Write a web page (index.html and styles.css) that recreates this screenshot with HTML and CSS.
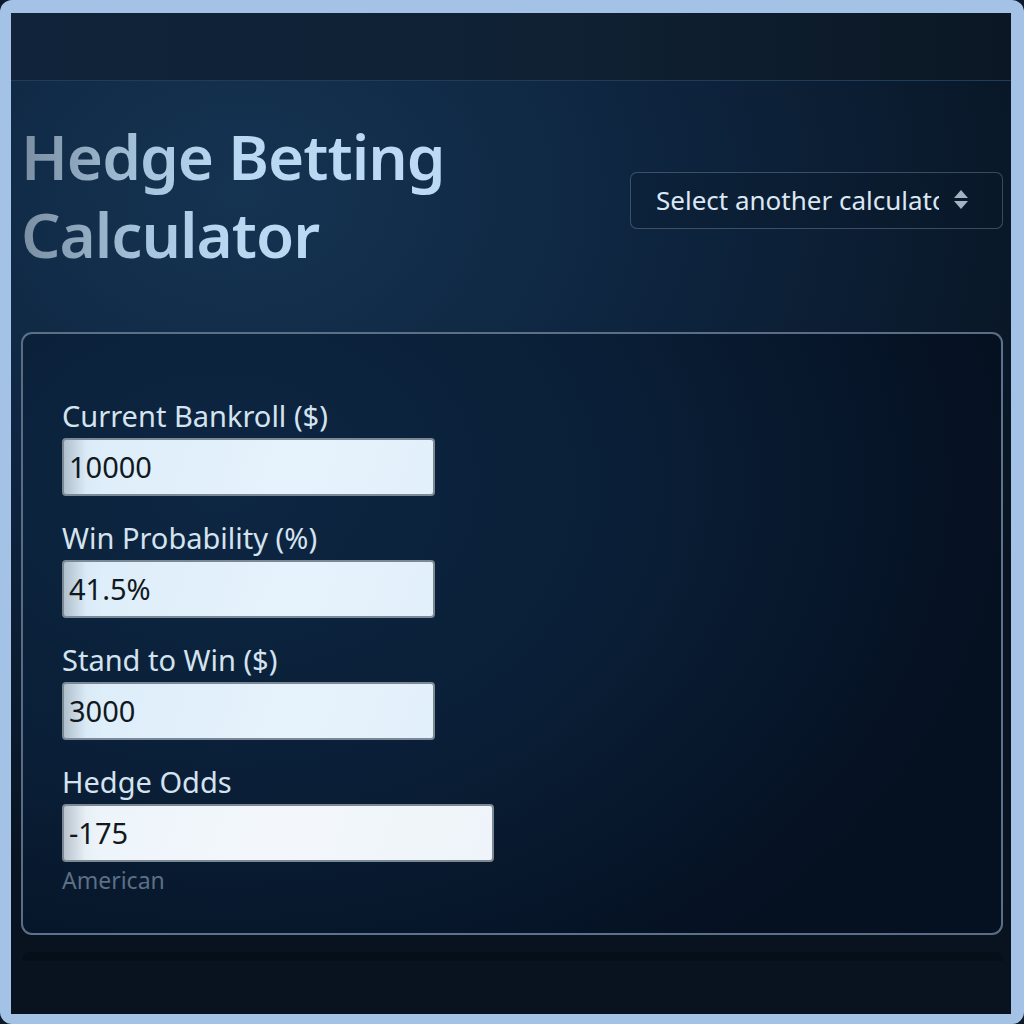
FILE: index.html
```html
<!DOCTYPE html>
<html lang="en">
<head>
<meta charset="utf-8">
<title>Hedge Betting Calculator</title>
<link rel="stylesheet" href="styles.css">
</head>
<body>
<div class="frame">
  <div class="app">
    <header class="topbar"></header>
    <main class="main">
      <div class="title-row">
        <h1 class="title">Hedge Betting<br>Calculator</h1>
        <div class="select">
          <span class="select-text">Select another calculator</span>
          <svg class="select-arrows" width="16" height="22" viewBox="0 0 16 22" aria-hidden="true">
            <polygon points="8,1 15,9 1,9" fill="#a3b3c3"/>
            <polygon points="1,12 15,12 8,20" fill="#a3b3c3"/>
          </svg>
        </div>
      </div>
      <section class="card">
        <div class="field">
          <label class="label">Current Bankroll ($)</label>
          <div class="input">10000</div>
        </div>
        <div class="field">
          <label class="label">Win Probability (%)</label>
          <div class="input">41.5%</div>
        </div>
        <div class="field">
          <label class="label">Stand to Win ($)</label>
          <div class="input">3000</div>
        </div>
        <div class="field last">
          <label class="label">Hedge Odds</label>
          <div class="input wide">-175</div>
          <div class="hint">American</div>
        </div>
      </section>
      <div class="next-card"></div>
    </main>
  </div>
</div>
</body>
</html>
```

FILE: styles.css
```css
* { box-sizing: border-box; }

html, body {
  margin: 0;
  padding: 0;
  background: #0b1a2a;
}

body {
  width: 1024px;
  height: 1024px;
  font-family: "Noto Sans", "Open Sans", sans-serif;
}

.frame {
  width: 1024px;
  height: 1024px;
  background: #a4c1e6;
  border-radius: 12px;
  padding: 13px 13px 10px 11px;
}

.app {
  height: 100%;
  display: flex;
  flex-direction: column;
  background: radial-gradient(ellipse 900px 700px at 230px 180px, #153452 0%, #0e2540 45%, #0a1a2c 80%, #08131f 100%);
  overflow: hidden;
}

.topbar {
  height: 68px;
  flex: none;
  background: linear-gradient(90deg, #10233a 0%, #0f2133 55%, #0b1724 100%);
  border-bottom: 1px solid #1f3c58;
}

.main {
  flex: 1;
  padding: 0 8px 0 10px;
  display: flex;
  flex-direction: column;
}

.title-row {
  display: flex;
  align-items: center;
  justify-content: space-between;
  margin-top: 36px;
}

.title {
  margin: 0;
  padding-left: 0;
  font-size: 62px;
  line-height: 78px;
  font-weight: 600;
  letter-spacing: -1px;
  background: linear-gradient(90deg, #7a8ea1 0px, #a5c3dc 120px, #b9d8f1 210px, #bcdaf3 100%);
  -webkit-background-clip: text;
  background-clip: text;
  color: transparent;
}

.select {
  width: 373px;
  height: 57px;
  margin-top: 10px;
  border: 1.5px solid rgba(150, 172, 196, 0.35);
  border-radius: 7px;
  background: rgba(8, 22, 38, 0.25);
  display: flex;
  align-items: center;
  padding: 0 20px 0 25px;
  gap: 14px;
}

.select-text {
  width: 283px;
  overflow: hidden;
  white-space: nowrap;
  font-size: 26px;
  color: #dbe7f2;
}

.select-arrows {
  flex: none;
}

.card {
  margin-top: 59px;
  height: 603px;
  border: 2px solid rgba(128, 150, 176, 0.7);
  border-radius: 11px;
  background: radial-gradient(ellipse 800px 600px at 200px 150px, #0d2642 0%, #0a1f37 50%, #061427 85%, #051020 100%);
  padding: 62px 20px 0 39px;
}

.field {
  margin-bottom: 22px;
}

.label {
  display: block;
  font-size: 29px;
  line-height: 40px;
  color: #d5e3ef;
  margin-bottom: 2px;
}

.input {
  width: 373px;
  height: 58px;
  border: 2px solid #7c8894;
  border-radius: 4px;
  background:
    linear-gradient(90deg, rgba(120, 135, 150, 0.45) 0px, rgba(200, 215, 228, 0.15) 22px, rgba(255, 255, 255, 0) 38px),
    linear-gradient(110deg, #dcedf9 0%, #e2f0fb 40%, #e7f3fc 60%, #e2f0fb 100%);
  font-size: 29px;
  line-height: 54px;
  color: #111820;
  padding: 0 5px;
}

.field.last .input {
  background:
    linear-gradient(90deg, rgba(120, 135, 150, 0.45) 0px, rgba(200, 215, 228, 0.15) 22px, rgba(255, 255, 255, 0) 38px),
    linear-gradient(110deg, #ecf4fa 0%, #f3f7fb 50%, #eef4f9 100%);
}

.input.wide {
  width: 432px;
}

.hint {
  margin-top: 3px;
  font-size: 23px;
  line-height: 30px;
  color: #5c6f84;
}

.next-card {
  margin-top: 17px;
  height: 9px;
  margin-left: 1px;
  border-radius: 8px 8px 0 0;
  background: rgba(2, 10, 20, 0.45);
}
```
